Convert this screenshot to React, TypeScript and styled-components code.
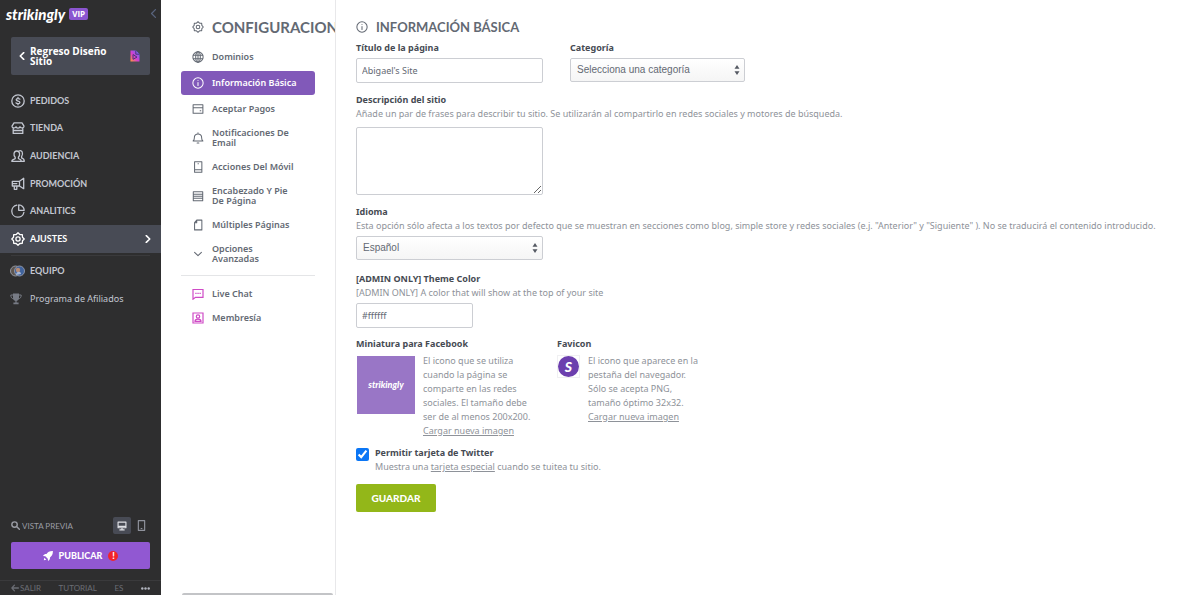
import React from 'react';
import styled, { createGlobalStyle } from 'styled-components';

const sans = `'Noto Sans', 'Open Sans', sans-serif`;
const display = `Lato, 'Open Sans', sans-serif`;

const Global = createGlobalStyle`
  *, *::before, *::after { box-sizing: border-box; }
  body { margin: 0; background: #fff; font: 400 9px/14px ${sans}; color: #8e9299; }
  button, input, select, textarea { font: inherit; color: inherit; margin: 0; }
  button { border: 0; padding: 0; background: none; cursor: pointer; }
  h1, h2, p, ul { margin: 0; padding: 0; }
  ul { list-style: none; }
  svg { display: block; flex: none; }
`;

const Page = styled.div`
  display: flex;
  height: 100vh;
`;

/* ---------- Sidebar ---------- */

const Sidebar = styled.aside`
  flex: none;
  display: flex;
  flex-direction: column;
  width: 161px;
  background: #2e2e2f;
  color: #c6c9d0;
  font-family: ${display};
`;

const Brand = styled.header`
  display: flex;
  align-items: center;
  height: 27px;
  padding: 0 3px 0 6px;
`;

const Wordmark = styled.span<{ $size: number }>`
  color: #fff;
  font: italic 900 ${p => p.$size}px/18px ${display};
`;

const Vip = styled.span`
  margin-left: 4px;
  padding: 0 3px;
  border-radius: 2px;
  background: #8b55d0;
  color: #fff;
  font: 700 8px/12px 'Open Sans', sans-serif;
`;

const Collapse = styled.button`
  margin-left: auto;
  color: #59647e;
`;

const SiteButton = styled.button`
  display: flex;
  align-items: center;
  gap: 4px;
  height: 38px;
  margin: 10px 11px 12px 11px;
  padding: 0 10px 0 7px;
  border-radius: 2px;
  background: #484b55;
  color: #fff;
  font: 700 10px/10px 'Open Sans', sans-serif;
  text-align: left;
  span { flex: 1; padding-right: 16px; }
`;

const Menu = styled.ul`
  display: grid;
  grid-auto-rows: 1fr;
  height: 166px;
`;

const MenuLink = styled.a<{ $active?: boolean }>`
  display: flex;
  align-items: center;
  height: 100%;
  gap: 5px;
  padding: 0 9px 0 11px;
  background: ${p => (p.$active ? '#484b55' : 'transparent')};
  color: ${p => (p.$active ? '#fff' : '#c3c7d1')};
  font-size: 9px;
  font-weight: 700;
  text-decoration: none;
  span { flex: 1; }
`;

const Extra = styled.ul`
  display: grid;
  grid-auto-rows: 28px;
  margin-top: 1px;
  ${MenuLink} { padding-left: 10px; }
`;

const Rule = styled.hr`
  width: calc(100% - 22px);
  margin: 2px 11px 0;
  border: 0;
  border-top: 1px solid #3a3a3c;
`;

const Plain = styled.span`
  font-family: ${sans};
  font-weight: 400;
`;

const Preview = styled.div`
  display: flex;
  align-items: center;
  gap: 2px;
  margin: auto 12px 8px 11px;
  color: #9a9ca4;
  font-size: 8px;
  span { flex: 1; }
`;

const Device = styled.button<{ $on?: boolean }>`
  display: grid;
  place-items: center;
  width: ${p => (p.$on ? 18 : 16)}px;
  height: 17px;
  border-radius: 2px;
  background: ${p => (p.$on ? '#484b55' : 'transparent')};
  color: ${p => (p.$on ? '#dfe1e6' : '#8f929c')};
`;

const Publish = styled.button`
  display: flex;
  align-items: center;
  justify-content: center;
  gap: 6px;
  height: 27px;
  margin: 0 11px 11px;
  border-radius: 2px;
  background: #9158d2;
  color: #fff;
  font: 900 9px/14px ${display};
`;

const Alert = styled.span`
  width: 10px;
  height: 10px;
  border-radius: 5px;
  background: #f2242b;
  font: 900 9px/10px ${display};
  text-align: center;
`;

const Foot = styled.footer`
  display: flex;
  align-items: center;
  justify-content: space-between;
  height: 15px;
  padding: 0 11px;
  border-top: 1px solid #3a3a3c;
  color: #6b6d74;
  font-size: 8px;
  a { display: flex; align-items: center; gap: 1px; color: inherit; text-decoration: none; }
`;

/* ---------- Settings navigation ---------- */

const Panel = styled.nav`
  flex: none;
  display: flex;
  flex-direction: column;
  width: 175px;
  padding: 17px 0 0 20px;
  border-right: 1px solid #e8e8ea;
  overflow: hidden;
`;

const PanelTitle = styled.h1`
  display: flex;
  align-items: center;
  gap: 8px;
  height: 20px;
  padding-left: 11px;
  margin-bottom: 8px;
  color: #636973;
  font: 700 15px/20px ${display};
  white-space: nowrap;
`;

const Options = styled.ul`
  display: grid;
  gap: 2px;
  width: 134px;
  padding-bottom: 6px;
`;

const Option = styled.a<{ $active?: boolean }>`
  display: flex;
  align-items: center;
  gap: 8px;
  min-height: 24px;
  padding: 5px 16px 5px 11px;
  border-radius: 3px;
  background: ${p => (p.$active ? '#8159b9' : 'transparent')};
  color: ${p => (p.$active ? '#fff' : '#636973')};
  font-weight: 600;
  line-height: 10px;
  text-decoration: none;
`;

const MoreOptions = styled(Options)`
  gap: 0;
  padding-top: 6px;
  border-top: 1px solid #e4e5e7;
`;

const ScrollTrack = styled.div`
  height: 2px;
  margin: auto 2px 0 1px;
  border-radius: 2px 2px 0 0;
  background: #c3c4c7;
`;

/* ---------- Form ---------- */

const Form = styled.form`
  flex: 1;
  min-width: 0;
  padding: 17px 8px 0 20px;
`;

const Heading = styled.h2`
  display: flex;
  align-items: center;
  gap: 8px;
  color: #636973;
  font: 700 13px/20px ${display};
`;

const Fields = styled.div<{ $gap: number }>`
  display: flex;
  align-items: flex-start;
  gap: ${p => p.$gap}px;
`;

const Group = styled.div<{ $top?: number }>`
  display: flex;
  flex-direction: column;
  align-items: flex-start;
  margin-top: ${p => p.$top ?? 0}px;
`;

const Label = styled.label`
  color: #464b53;
  font-weight: 700;
  line-height: 14px;
`;

const Hint = styled.p`
  line-height: 14px;
  a { color: inherit; }
`;

const TextInput = styled.input<{ $width: number }>`
  width: ${p => p.$width}px;
  height: 25px;
  margin-top: 3px;
  padding: 0 5px;
  border: 1px solid #ccced3;
  border-radius: 2px;
  background: #fff;
  color: #636973;
`;

const TextArea = styled.textarea`
  display: block;
  width: 187px;
  height: 68px;
  margin-top: 6px;
  padding: 5px;
  border: 1px solid #ccced3;
  border-radius: 2px;
  background: #fff;
  resize: both;
`;

const SelectWrap = styled.div<{ $width: number }>`
  position: relative;
  width: ${p => p.$width}px;
  margin-top: 3px;
  svg { position: absolute; right: 5px; top: 7px; pointer-events: none; }
`;

const Select = styled.select`
  display: block;
  appearance: none;
  width: 100%;
  height: 24px;
  padding: 0 6px;
  border: 1px solid #ccced3;
  border-radius: 2px;
  background: linear-gradient(#fff, #f5f5f5);
  color: #636973;
  font: 400 10px/14px 'Liberation Sans', sans-serif;
`;

const Media = styled.div`
  display: flex;
  align-items: flex-start;
  gap: 8px;
  padding-top: 3px;
`;

const Thumb = styled.div`
  display: grid;
  place-items: center;
  width: 58px;
  height: 58px;
  margin: 2px 0 0 1px;
  background: #9976c6;
`;

const Favicon = styled.div`
  display: grid;
  place-items: center;
  width: 23px;
  height: 23px;
  margin-top: 1px;
  border: 1px solid #f0f0f2;
  span {
    width: 21px;
    height: 21px;
    border-radius: 11px;
    background: #6c3fae;
    color: #fff;
    font: italic 900 14px/21px ${display};
    text-align: center;
  }
`;

const MediaText = styled(Hint)<{ $width: number }>`
  width: ${p => p.$width}px;
`;

const CheckRow = styled.div`
  display: flex;
  align-items: flex-start;
  gap: 6px;
  margin-top: 8px;
`;

const Checkbox = styled.input`
  width: 13px;
  height: 13px;
  margin: 2px 0 0;
  accent-color: #0b76f5;
`;

const Save = styled.button`
  height: 28px;
  min-width: 80px;
  margin-top: 10px;
  padding: 0 14px;
  border-radius: 2px;
  background: #93b719;
  color: #fff;
  font: 900 10px/14px ${display};
`;

/* ---------- Icons ---------- */

const Icon = ({ size = 14, w = 1.3, children }: { size?: number; w?: number; children: React.ReactNode }) => (
  <svg width={size} height={size} viewBox="0 0 14 14" fill="none" stroke="currentColor" strokeWidth={w} strokeLinecap="round" strokeLinejoin="round" aria-hidden="true">
    {children}
  </svg>
);

const gearPath = 'M7 .8 8.8 2.5 11.3 2.7 11.5 5.2 13.2 7 11.5 8.8 11.3 11.3 8.8 11.5 7 13.2 5.2 11.5 2.7 11.3 2.5 8.8 .8 7 2.5 5.2 2.7 2.7 5.2 2.5Z';
const gear = <><path d={gearPath} /><circle cx="7" cy="7" r="2.1" /></>;
const info = <><circle cx="7" cy="7" r="6" /><path d="M7 6.4v3.6M7 4v.2" /></>;

const menu = [
  { text: 'PEDIDOS', icon: <><circle cx="7" cy="7" r="6.2" /><path d="M8.9 5.1C8.2 4.3 5.2 4.2 5.2 5.8S8.9 6.8 8.9 8.4 5.7 9.9 5 8.9M7 3.3v1M7 9.8v1" /></> },
  { text: 'TIENDA', icon: <><path d="M3 1.8h8l2 3.4c0 2-2.8 2.3-4 .6-1 1.7-3 1.7-4 0C3.8 7.5 1 7.2 1 5.2ZM2.2 7.4v5h9.600v-5M2.500 9.500h9" /></> },
  { text: 'AUDIENCIA', icon: <><path d="M.8 12.300h9.600c0-1.700-1.500-2.100-3-2.700V8.300c2-1.900 1.600-6.300-1.600-6.300S2.200 6.400 4.200 8.300v1.300c-1.700.6-3.400 1-3.400 2.700Z" /><path d="M8 2c2.900-1.500 4.700 2.200 2.600 5.600v1.300c1.400.5 2.700 1 2.700 3.400h-2.600" /></> },
  { text: 'PROMOCIÓN', icon: <path d="M12.700 1.300v10.400L8.500 9H1.300V4.300h7.200ZM3.300 9v3.300h2.500V9M8.500 4.300V9M1.300 6.600h4.500" /> },
  { text: 'ANALITICS', icon: <><path d="M5.800 1.100A6.100 6.100 0 1 0 12.900 8.300" /><path d="M7.700.9V6.300h5.500A5.500 5.500 0 0 0 7.700.9Z" /></> },
  { text: 'AJUSTES', icon: gear, active: true },
];

const options = [
  { text: 'Dominios', icon: <><circle cx="7" cy="7" r="6" /><ellipse cx="7" cy="7" rx="2.700" ry="6" /><path d="M1.500 5h11M1.500 9h11M7 1v12" /></> },
  { text: 'Información Básica', icon: info, active: true },
  { text: 'Aceptar Pagos', icon: <path d="M1.300 2h11.400v10H1.300ZM1.300 5.500h11.400M9.500 9h.8" /> },
  { text: 'Notificaciones De Email', icon: <path d="M1.300 10.500h11.400C11 9.300 11.300 7.500 11.200 6 11 3.700 9.500 2.300 7 2.300S3 3.700 2.800 6C2.700 7.500 3 9.300 1.300 10.500ZM7 1v1.300M6 12.900h2" /> },
  { text: 'Acciones Del Móvil', icon: <path d="M3 1h8.500v12H3ZM3 10.300h8.500M7 3.300h.5" /> },
  { text: 'Encabezado Y Pie De Página', icon: <path d="M1.500 2h11v10.500h-11ZM1.500 5h11M1.500 7.300h11M1.500 9.700h11" /> },
  { text: 'Múltiples Páginas', icon: <path d="M5.500 1.300h6v11.400H3V4.200ZM5.500 1.300v3H3" /> },
  { text: 'Opciones Avanzadas', icon: <path d="m3 5 4 4 4-4" /> },
];

const Updown = () => (
  <svg width="6" height="10" viewBox="0 0 6 10" fill="#555a63" aria-hidden="true"><path d="M3 0 5.500 3.700H.5ZM3 10 .5 6.300h5Z" /></svg>
);

export default function App() {
  return (
    <Page>
      <Global />
      <Sidebar>
        <Brand>
          <Wordmark $size={15}>strikingly</Wordmark>
          <Vip>VIP</Vip>
          <Collapse type="button" aria-label="Contraer"><Icon size={9} w={2}><path d="M10 1 4 7l6 6" /></Icon></Collapse>
        </Brand>
        <SiteButton type="button">
          <Icon size={8} w={2.8}><path d="M10 1 4 7l6 6" /></Icon>
          <span>Regreso Diseño Sitio</span>
          <svg width="10" height="12" viewBox="0 0 10 12" aria-hidden="true">
            <defs>
              <linearGradient id="doc" x1="0" y1="1" x2="1" y2="0">
                <stop offset="0" stopColor="#ff9a3c" /><stop offset=".45" stopColor="#d83bd0" /><stop offset="1" stopColor="#4a7dff" />
              </linearGradient>
            </defs>
            <path d="M.5.500H6L9.500 4v7.500H.5Z" fill="url(#doc)" />
            <path d="M5.800.500V4.200H9.500M3 4.500v4.800l4-2.200Z" fill="none" stroke="#4b3579" strokeWidth="1" />
          </svg>
        </SiteButton>
        <Menu>
          {menu.map(m => (
            <li key={m.text}>
              <MenuLink href="#" $active={m.active}>
                <Icon>{m.icon}</Icon>
                <span>{m.text}</span>
                {m.active && <Icon size={8} w={2.8}><path d="m4 1 6 6-6 6" /></Icon>}
              </MenuLink>
            </li>
          ))}
        </Menu>
        <Rule />
        <Extra>
          <li>
            <MenuLink href="#">
              <svg width="15" height="12" viewBox="0 0 15 12" aria-hidden="true">
                <circle cx="5.500" cy="6" r="5" fill="#5d554f" stroke="#9296a0" />
                <circle cx="9.500" cy="6" r="5" fill="#40639d" stroke="#8d94a5" />
                <circle cx="8" cy="5" r="2.200" fill="#b88d75" />
                <path d="M6 10c0-4 5-4 5-1" fill="#a9b9d6" />
              </svg>
              <span>EQUIPO</span>
            </MenuLink>
          </li>
          <li>
            <MenuLink href="#">
              <svg width="15" height="12" viewBox="0 0 15 12" fill="#777b85" aria-hidden="true">
                <path d="M3 .5h6v4.200C9 6.500 8 7.500 6.600 7.900v1.600h2v1.800h-5.200V9.500h2V7.900C4 7.500 3 6.500 3 4.700Z" />
                <path d="M3 2H.8c0 2.500 1 3.700 2.900 3.700M9 2h2.200c0 2.500-1 3.700-2.900 3.700" fill="none" stroke="#777b85" />
              </svg>
              <Plain>Programa de Afiliados</Plain>
            </MenuLink>
          </li>
        </Extra>
        <Preview>
          <Icon size={9} w={2.2}><circle cx="5.500" cy="5.500" r="4.200" /><path d="m9 9 4 4" /></Icon>
          <span>VISTA PREVIA</span>
          <Device type="button" $on aria-label="Escritorio"><Icon size={10} w={1.6}><path d="M1.500 1.500h11v8h-11ZM1.500 7.500h11M4 12.500h6M7 9.500v3" /></Icon></Device>
          <Device type="button" aria-label="Móvil"><Icon size={11} w={1.5}><path d="M3 .8h8v12.400H3ZM6.500 10.800h1" /></Icon></Device>
        </Preview>
        <Publish type="button">
          <svg width="10" height="10" viewBox="0 0 10 10" fill="currentColor" aria-hidden="true">
            <path d="M9.900.1C6.500 0 4.800 1.200 3.500 3 2 2.900 1 3.400 0 5l2.300.2 2.500 2.500L5 10c1.600-1 2.100-2 2-3.500C8.800 5.200 10 3.500 9.900.1ZM.8 9.200l.5-2.500L3.300 8.700Z" />
          </svg>
          PUBLICAR
          <Alert>!</Alert>
        </Publish>
        <Foot>
          <a href="#"><Icon size={8} w={2.2}><path d="M13 7H1.500M6 2 1.500 7 6 12" /></Icon>SALIR</a>
          <a href="#">TUTORIAL</a>
          <a href="#">ES</a>
          <a href="#" aria-label="Más">
            <svg width="9" height="3" viewBox="0 0 9 3" fill="#b3b6c0"><circle cx="1.300" cy="1.500" r="1.200" /><circle cx="4.500" cy="1.500" r="1.200" /><circle cx="7.700" cy="1.500" r="1.200" /></svg>
          </a>
        </Foot>
      </Sidebar>

      <Panel>
        <PanelTitle><Icon size={12} w={1.2}>{gear}</Icon>CONFIGURACION</PanelTitle>
        <Options>
          {options.map(o => (
            <li key={o.text}>
              <Option href="#" $active={o.active}><Icon size={12} w={1.2}>{o.icon}</Icon>{o.text}</Option>
            </li>
          ))}
        </Options>
        <MoreOptions>
          <li><Option href="#">
            <svg width="12" height="12" viewBox="0 0 12 12" fill="none" stroke="#cf4bc6" strokeWidth="1.200" aria-hidden="true"><path d="M1 1.500h10v7.800H3.500L1 11.200ZM3.300 5.400h1.300M5.400 5.400h1.300M7.500 5.400h1.300" /></svg>
            Live Chat
          </Option></li>
          <li><Option href="#">
            <svg width="12" height="12" viewBox="0 0 12 12" fill="none" stroke="#cf4bc6" strokeWidth="1.200" aria-hidden="true"><path d="M1 1h10v10H1ZM3 9.300c0-2.800 6-2.800 6 0Z" /><circle cx="6" cy="4.500" r="1.700" /></svg>
            Membresía
          </Option></li>
        </MoreOptions>
        <ScrollTrack />
      </Panel>

      <Form onSubmit={e => e.preventDefault()}>
        <Heading><Icon size={12} w={1.2}>{info}</Icon>INFORMACIÓN BÁSICA</Heading>
        <Fields $gap={27}>
          <Group $top={4}>
            <Label htmlFor="title">Título de la página</Label>
            <TextInput id="title" $width={187} defaultValue="Abigael's Site" />
          </Group>
          <Group $top={4}>
            <Label htmlFor="category">Categoría</Label>
            <SelectWrap $width={175}>
              <Select id="category"><option>Selecciona una categoría</option></Select>
              <Updown />
            </SelectWrap>
          </Group>
        </Fields>
        <Group $top={10}>
          <Label htmlFor="description">Descripción del sitio</Label>
          <Hint>Añade un par de frases para describir tu sitio. Se utilizarán al compartirlo en redes sociales y motores de búsqueda.</Hint>
          <TextArea id="description" />
        </Group>
        <Group $top={10}>
          <Label htmlFor="language">Idioma</Label>
          <Hint>Esta opción sólo afecta a los textos por defecto que se muestran en secciones como blog, simple store y redes sociales (e.j. "Anterior" y "Siguiente" ). No se traducirá el contenido introducido.</Hint>
          <SelectWrap $width={187}>
            <Select id="language"><option>Español</option></Select>
            <Updown />
          </SelectWrap>
        </Group>
        <Group $top={12}>
          <Label htmlFor="theme">[ADMIN ONLY] Theme Color</Label>
          <Hint>[ADMIN ONLY] A color that will show at the top of your site</Hint>
          <TextInput id="theme" $width={117} defaultValue="#ffffff" />
        </Group>
        <Fields $gap={20}>
          <Group $top={9}>
            <Label as="p">Miniatura para Facebook</Label>
            <Media>
              <Thumb><Wordmark $size={9}>strikingly</Wordmark></Thumb>
              <MediaText $width={114}>El icono que se utiliza cuando la página se comparte en las redes sociales. El tamaño debe ser de al menos 200x200. <a href="#">Cargar nueva imagen</a></MediaText>
            </Media>
          </Group>
          <Group $top={9}>
            <Label as="p">Favicon</Label>
            <Media>
              <Favicon><span>S</span></Favicon>
              <MediaText $width={118}>El icono que aparece en la pestaña del navegador. Sólo se acepta PNG, tamaño óptimo 32x32. <a href="#">Cargar nueva imagen</a></MediaText>
            </Media>
          </Group>
        </Fields>
        <CheckRow>
          <Checkbox id="card" type="checkbox" defaultChecked />
          <div>
            <Label htmlFor="card">Permitir tarjeta de Twitter</Label>
            <Hint>Muestra una <a href="#">tarjeta especial</a> cuando se tuitea tu sitio.</Hint>
          </div>
        </CheckRow>
        <Save type="submit">GUARDAR</Save>
      </Form>
    </Page>
  );
}
